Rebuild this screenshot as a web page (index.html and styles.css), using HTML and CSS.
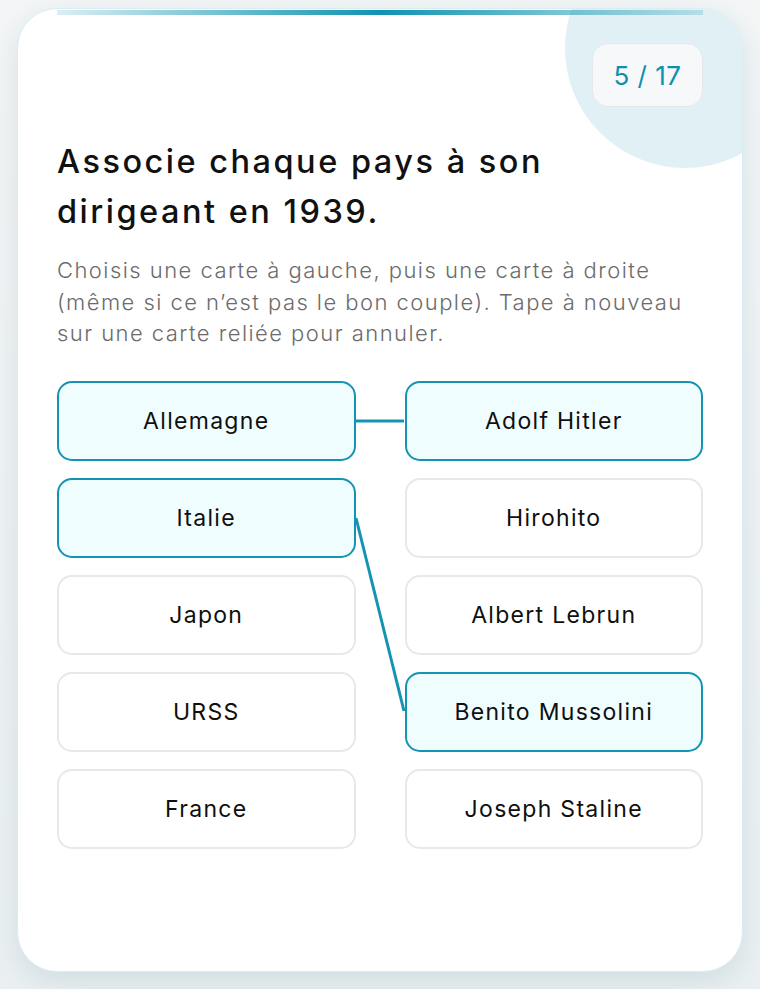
FILE: index.html
```html
<!DOCTYPE html>
<html lang="fr">
<head>
  <meta charset="UTF-8" />
  <meta name="viewport" content="width=device-width, initial-scale=1.0"/>
  <title>Quiz – Associer</title>
  <link rel="stylesheet" href="styles.css">
</head>
<body>
  <div class="card">
    <div class="card-blob"></div>
    <div class="top-bar"></div>

    <div class="card-head">
      <div class="counter">5 / 17</div>
    </div>

    <h1 class="question">Associe chaque pays à son dirigeant en 1939.</h1>
    <p class="hint">Choisis une carte à gauche, puis une carte à droite (même si ce n’est pas le bon couple). Tape à nouveau sur une carte reliée pour annuler.</p>

    <div class="board">
      <!-- liens entre les cartes reliées -->
      <svg class="links" width="646" height="466" viewBox="0 0 646 466">
        <line x1="298" y1="40" x2="347" y2="40" />
        <line x1="299" y1="137" x2="347" y2="330" />
      </svg>

      <button class="pick linked">Allemagne</button>
      <button class="pick linked">Adolf Hitler</button>

      <button class="pick linked">Italie</button>
      <button class="pick">Hirohito</button>

      <button class="pick">Japon</button>
      <button class="pick">Albert Lebrun</button>

      <button class="pick">URSS</button>
      <button class="pick linked">Benito Mussolini</button>

      <button class="pick">France</button>
      <button class="pick">Joseph Staline</button>
    </div>
  </div>
</body>
</html>
```

FILE: styles.css
```css
body {
  margin: 0;
  padding: 8px 17px 17px;
  background: linear-gradient(180deg, #f3f5f6 0%, #eaf0f2 100%);
  font-family: Inter, "Noto Sans", sans-serif;
  min-height: 100vh;
  box-sizing: border-box;
}
.card {
  position: relative;
  overflow: hidden;
  height: 964px;
  box-sizing: border-box;
  padding: 0 39px;
  background: #fff;
  border: 1px solid #d9eef4;
  border-radius: 40px;
  box-shadow: 0 10px 28px rgba(30, 90, 110, 0.12);
}
/* rond décoratif en haut à droite */
.card-blob {
  position: absolute;
  top: -81px;
  right: -63px;
  width: 240px;
  height: 240px;
  border-radius: 50%;
  background: #e0f0f5;
}
.top-bar {
  position: relative;
  height: 5px;
  margin-top: 1px;
  background: linear-gradient(90deg, rgba(14, 147, 176, 0.15) 0%, #0e93b0 50%, rgba(14, 147, 176, 0.2) 100%);
}
.card-head {
  position: relative;
  display: flex;
  justify-content: flex-end;
  margin-top: 28px;
}
.counter {
  width: 111px;
  height: 64px;
  box-sizing: border-box;
  display: flex;
  align-items: center;
  justify-content: center;
  background: #f6f8fa;
  border: 1px solid #e4e8eb;
  border-radius: 16px;
  color: #0e8fb0;
  font-size: 26px;
  font-weight: 400;
  letter-spacing: 0.5px;
}
.question {
  position: relative;
  margin: 30px 0 0;
  font-size: 32.5px;
  line-height: 50px;
  font-weight: 500;
  letter-spacing: 2.5px;
  color: #111;
  max-width: 560px;
}
.hint {
  margin: 18px 0 0;
  font-size: 22px;
  font-weight: 300;
  line-height: 31.5px;
  letter-spacing: 1.45px;
  color: #6b6b6b;
}
.board {
  position: relative;
  display: grid;
  grid-template-columns: 1fr 1fr;
  grid-auto-rows: 80px;
  column-gap: 49px;
  row-gap: 17px;
  margin-top: 31px;
}
.links {
  position: absolute;
  top: 0;
  left: 0;
  pointer-events: none;
}
.links line {
  stroke: #1593b3;
  stroke-width: 3;
}
.pick {
  font-family: inherit;
  font-size: 23px;
  font-weight: 400;
  letter-spacing: 1.3px;
  color: #0f0f0f;
  background: #fff;
  border: 2px solid #e7e8eb;
  border-radius: 15px;
  cursor: pointer;
}
.pick.linked {
  background: #effdfe;
  border-color: #1593b3;
}
```
